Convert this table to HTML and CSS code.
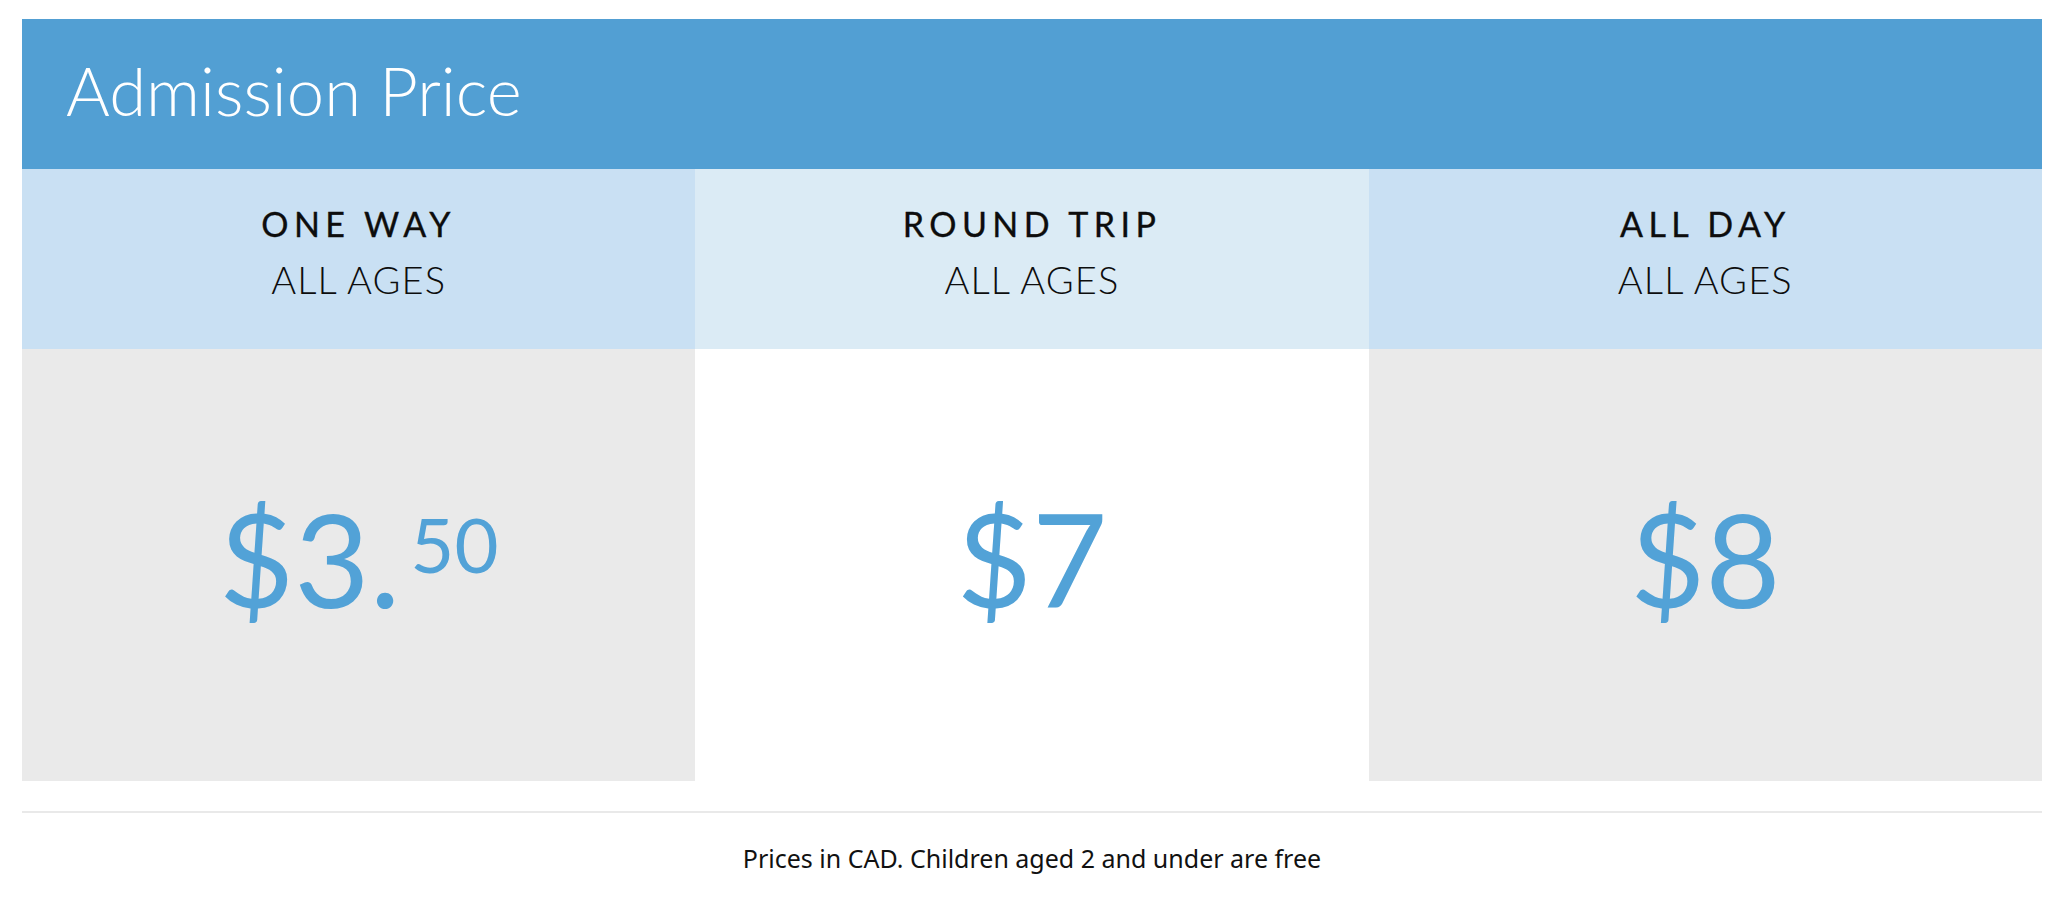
FILE: index.html
```html
<!DOCTYPE html>
<html>
<head>
<meta charset="utf-8">
<link rel="stylesheet" href="styles.css">
</head>
<body>
<div class="card">
  <div class="title">Admission Price</div>
  <div class="cols">
    <div class="col col-a">
      <div class="head"><div class="name">ONE WAY</div><div class="ages">ALL AGES</div></div>
      <div class="price"><span class="amount">$3.<span class="cents">50</span></span></div>
    </div>
    <div class="col col-b">
      <div class="head"><div class="name">ROUND TRIP</div><div class="ages">ALL AGES</div></div>
      <div class="price"><span class="amount">$7</span></div>
    </div>
    <div class="col col-a">
      <div class="head"><div class="name">ALL DAY</div><div class="ages">ALL AGES</div></div>
      <div class="price"><span class="amount">$8</span></div>
    </div>
  </div>
  <div class="rule"></div>
  <p class="note">Prices in CAD. Children aged 2 and under are free</p>
</div>
</body>
</html>
```

FILE: styles.css
```css
html, body {
  margin: 0;
  padding: 0;
  background: #ffffff;
}
.card {
  margin: 19px 22px 0 22px;
  font-family: Lato, "Open Sans", sans-serif;
}
.title {
  height: 150px;
  background: #529fd3;
  color: #ffffff;
  display: flex;
  align-items: center;
  padding: 0 0 8px 44px;
  font-size: 67px;
  font-weight: 300;
  box-sizing: border-box;
}
.cols {
  display: grid;
  grid-template-columns: 1fr 1fr 1fr;
}
.head {
  height: 180px;
  display: flex;
  flex-direction: column;
  align-items: center;
  justify-content: center;
  color: #0d0d0d;
  gap: 15px;
  padding-bottom: 16px;
  box-sizing: border-box;
}
.col-a .head { background: #c9e0f3; }
.col-b .head { background: #dbebf5; }
.name {
  font-size: 34px;
  font-weight: 400;
  letter-spacing: 0.16em;
  line-height: 40px;
  -webkit-text-stroke: 0.35px #0d0d0d;
}
.ages {
  font-size: 38px;
  font-weight: 300;
  letter-spacing: 0.03em;
  line-height: 40px;
}
.price {
  height: 432px;
  display: flex;
  align-items: center;
  justify-content: center;
  color: #52a2d7;
  padding-bottom: 14px;
  box-sizing: border-box;
}
.amount {
  font-size: 130px;
  line-height: 1;
  font-weight: 400;
}
.col-a .price { background: #eaeaea; }
.col-b .price { background: #ffffff; }
.cents {
  display: inline-block;
  vertical-align: top;
  font-size: 76px;
  line-height: 1;
  padding-top: 13px;
  margin-left: 10px;
}
.rule {
  margin-top: 30px;
  height: 2px;
  background: #e9e9e9;
}
.note {
  margin: 28px 0 0 0;
  text-align: center;
  font-family: "Noto Sans", sans-serif;
  font-size: 25px;
  line-height: 34px;
  color: #111111;
}
```
